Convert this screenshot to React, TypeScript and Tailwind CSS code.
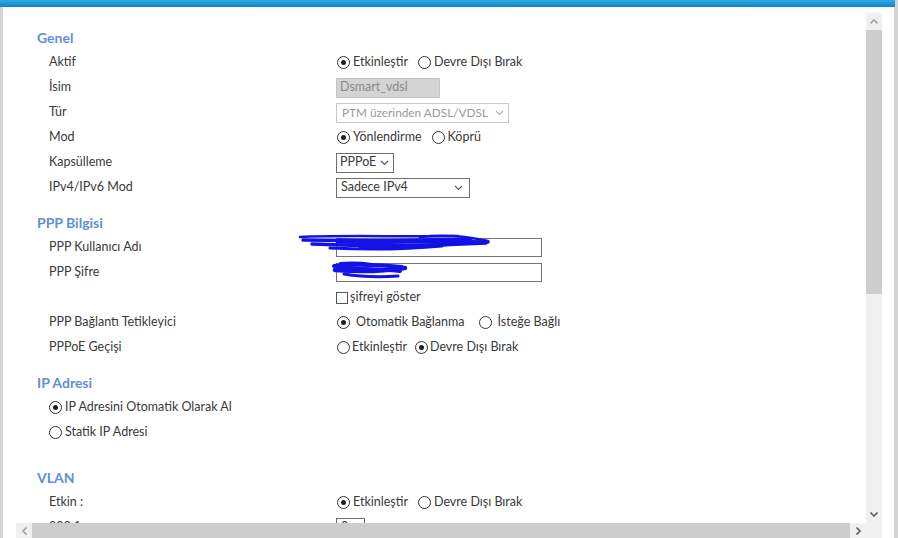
import React from "react";

const FONT = { fontFamily: "Lato, 'Noto Sans', sans-serif" };

function Radio({ checked }: { checked?: boolean }) {
  return (
    <span className="inline-flex w-[13px] h-[13px] shrink-0 rounded-full border border-[#333] bg-white items-center justify-center">
      {checked && <span className="w-[5px] h-[5px] rounded-full bg-[#1e1e1e]" />}
    </span>
  );
}

function Chevron({ color = "#555" }: { color?: string }) {
  return (
    <svg width="9" height="6" viewBox="0 0 9 6" className="shrink-0">
      <path d="M1 1 L4.5 4.5 L8 1" fill="none" stroke={color} strokeWidth="1.1" />
    </svg>
  );
}

function Heading({ children, mt }: { children: React.ReactNode; mt: string }) {
  return (
    <div className={`h-[24px] flex items-center pl-[21px] text-[14px] font-bold text-[#5f8fda] ${mt}`}>
      {children}
    </div>
  );
}

function Row({ label, children }: { label?: React.ReactNode; children?: React.ReactNode }) {
  return (
    <div className="h-[25px] flex items-center pl-[33px] relative">
      <div className="w-[288px] shrink-0 text-[#3a3a3a]">{label}</div>
      <div className="flex items-center text-[#3a3a3a]">{children}</div>
    </div>
  );
}

function RadioPair({
  a,
  b,
  first,
  gapText = "ml-[3px]",
  gapBetween = "ml-[10px]",
}: {
  a: string;
  b: string;
  first: boolean;
  gapText?: string;
  gapBetween?: string;
}) {
  return (
    <div className="flex items-center">
      <Radio checked={first} />
      <span className={gapText}>{a}</span>
      <span className={gapBetween} />
      <Radio checked={!first} />
      <span className={gapText}>{b}</span>
    </div>
  );
}

export default function App() {
  return (
    <div className="w-[898px] h-[538px] overflow-hidden flex flex-col bg-white text-[12.5px] whitespace-nowrap" style={FONT}>
      <div className="flex h-[7px] shrink-0">
        <div className="w-[895px] bg-gradient-to-b from-[#2eaae2] to-[#0d84c5]" />
        <div className="flex-1 bg-[#d4d4d4]" />
      </div>
      <div className="flex flex-1 min-h-0">
        <div className="w-[3px] bg-[#d4d4d4]" />
        <div className="flex-1 pl-[13px] pt-[6px] pr-[12px] flex flex-col min-w-0 min-h-0">
          <div className="flex-1 flex flex-col min-h-0">
            <div className="flex flex-1 min-h-0">
              <div className="flex-1 min-w-0 overflow-hidden relative pt-[13px] leading-none">
                <Heading mt="">Genel</Heading>
                <Row label="Aktif">
                  <RadioPair a="Etkinleştir" b="Devre Dışı Bırak" first />
                </Row>
                <Row label="İsim">
                  <div className="w-[104px] h-[20px] -ml-[1px] bg-[#d4d4d4] border border-[#c4c4c4] flex items-center pl-[3px] text-[#8a8a8a]">
                    Dsmart_vdsl
                  </div>
                </Row>
                <Row label="Tür">
                  <div className="w-[173px] h-[20px] -ml-[1px] border border-[#c8c8c8] flex items-center justify-between pl-[5px] pr-[4px] text-[#9a9a9a]">
                    <span className="whitespace-nowrap text-[11.8px]">PTM üzerinden ADSL/VDSL</span>
                    <Chevron color="#b0b0b0" />
                  </div>
                </Row>
                <Row label="Mod">
                  <RadioPair a="Yönlendirme" b="Köprü" first />
                </Row>
                <Row label="Kapsülleme">
                  <div className="w-[58px] h-[20px] -ml-[1px] border border-[#6e6e6e] flex items-center justify-between pl-[3px] pr-[4px]">
                    <span>PPPoE</span>
                    <Chevron />
                  </div>
                </Row>
                <Row label="IPv4/IPv6 Mod">
                  <div className="w-[134px] h-[20px] -ml-[1px] border border-[#6e6e6e] flex items-center justify-between pl-[4px] pr-[6px]">
                    <span>Sadece IPv4</span>
                    <Chevron />
                  </div>
                </Row>

                <Heading mt="mt-[11px]">PPP Bilgisi</Heading>
                <Row label="PPP Kullanıcı Adı">
                  <div className="w-[206px] h-[19px] -ml-[1px] border border-[#767676]" />
                </Row>
                <Row label="PPP Şifre">
                  <div className="w-[206px] h-[19px] -ml-[1px] border border-[#767676]" />
                </Row>
                <Row>
                  <span className="w-[12px] h-[12px] -ml-[1px] border border-[#555] bg-white shrink-0" />
                  <span className="ml-[2px]">şifreyi göster</span>
                </Row>
                <Row label="PPP Bağlantı Tetikleyici">
                  <RadioPair a="Otomatik Bağlanma" b="İsteğe Bağlı" first gapText="ml-[6px]" gapBetween="ml-[14px]" />
                </Row>
                <Row label="PPPoE Geçişi">
                  <RadioPair a="Etkinleştir" b="Devre Dışı Bırak" first={false} gapText="ml-[2px]" gapBetween="ml-[8px]" />
                </Row>

                <Heading mt="mt-[11px]">IP Adresi</Heading>
                <div className="h-[25px] flex items-center pl-[33px] text-[#3a3a3a]">
                  <Radio checked />
                  <span className="ml-[3px]">IP Adresini Otomatik Olarak Al</span>
                </div>
                <div className="h-[25px] flex items-center pl-[33px] text-[#3a3a3a]">
                  <Radio />
                  <span className="ml-[3px]">Statik IP Adresi</span>
                </div>

                <Heading mt="mt-[21px]">VLAN</Heading>
                <Row label="Etkin :">
                  <RadioPair a="Etkinleştir" b="Devre Dışı Bırak" first />
                </Row>
                <Row label="802.1p :">
                  <div className="w-[29px] h-[20px] -ml-[1px] border border-[#6e6e6e] flex items-center pl-[4px]">0</div>
                </Row>

                <svg
                  className="absolute left-[280px] top-[217px] pointer-events-none"
                  width="220"
                  height="60"
                  viewBox="296 230 220 60"
                >
                  <g fill="none" stroke="#1212e6" strokeLinecap="round">
                    <path d="M300 237 C340 235, 400 237, 458 236" strokeWidth="2.5" />
                    <path d="M303 240 C350 240, 420 241, 488 242" strokeWidth="3.5" />
                    <path d="M312 244 C360 246, 430 246, 486 243" strokeWidth="3.5" />
                    <path d="M330 248 C370 250, 410 249, 442 246" strokeWidth="3" />
                    <path d="M338 241 C380 243, 420 240, 470 240" strokeWidth="5" />
                    <path d="M420 237 C445 234, 470 237, 488 241" strokeWidth="2.5" />
                    <path d="M360 246 C390 247, 420 246, 450 244" strokeWidth="4" />
                    <path d="M334 266 C352 264, 380 265, 402 267" strokeWidth="4" />
                    <path d="M335 270 C360 272, 385 271, 405 268" strokeWidth="4.5" />
                    <path d="M344 274 C362 277, 382 277, 398 276" strokeWidth="3" />
                    <path d="M338 268 C360 269, 380 269, 400 271" strokeWidth="4" />
                    <path d="M340 263 C355 262, 365 263, 372 264" strokeWidth="2" />
                  </g>
                </svg>
              </div>
              <div className="w-[16px] shrink-0 flex flex-col bg-[#f0f0f0]">
                <div className="h-[17px] flex items-center justify-center">
                  <svg width="8" height="5" viewBox="0 0 8 5">
                    <path d="M0.5 4.5 L4 1 L7.5 4.5" fill="none" stroke="#a3a3a3" strokeWidth="1.6" />
                  </svg>
                </div>
                <div className="h-[264px] bg-[#cdcdcd]" />
                <div className="flex-1" />
                <div className="h-[17px] flex items-center justify-center">
                  <svg width="8" height="5" viewBox="0 0 8 5">
                    <path d="M0.5 0.5 L4 4 L7.5 0.5" fill="none" stroke="#606060" strokeWidth="1.6" />
                  </svg>
                </div>
              </div>
            </div>
            <div className="h-[15px] shrink-0 flex">
              <div className="w-[16px] bg-[#f0f0f0] flex items-center justify-center">
                <svg width="5" height="8" viewBox="0 0 5 8">
                  <path d="M4.5 0.5 L1 4 L4.5 7.5" fill="none" stroke="#a3a3a3" strokeWidth="1.6" />
                </svg>
              </div>
              <div className="flex-1 bg-[#cdcdcd]" />
              <div className="w-[16px] bg-[#f0f0f0] flex items-center justify-center">
                <svg width="5" height="8" viewBox="0 0 5 8">
                  <path d="M0.5 0.5 L4 4 L0.5 7.5" fill="none" stroke="#606060" strokeWidth="1.6" />
                </svg>
              </div>
              <div className="w-[16px] bg-[#f0f0f0]" />
            </div>
          </div>
        </div>
        <div className="w-[4px] bg-[#d4d4d4]" />
      </div>
    </div>
  );
}
